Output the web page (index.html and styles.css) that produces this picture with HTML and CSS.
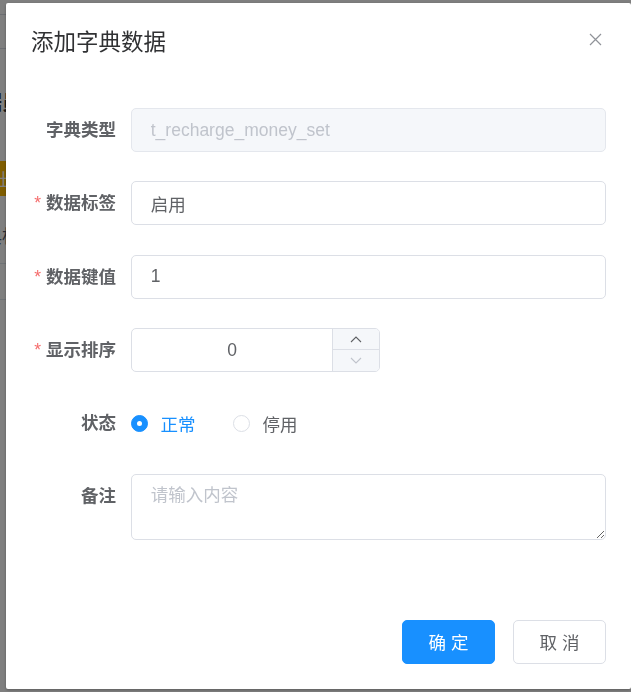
FILE: index.html
```html
<!DOCTYPE html>
<html lang="zh-CN">
<head>
<meta charset="utf-8">
<title>添加字典数据</title>
<link rel="stylesheet" href="styles.css">
</head>
<body>
<div class="page">
  <div class="navbar"></div>
  <div class="tags"><span class="tag">字典</span></div>
  <div class="query"><span class="query-label">数据员</span></div>
  <div class="toolbar"><span class="btn-warning">导出</span></div>
  <div class="table-head"><span class="th">字典标签</span></div>
  <div class="table-row"></div>
</div>
<div class="overlay"></div>

<div class="dialog">
  <div class="dialog-header">
    <span class="dialog-title">添加字典数据</span>
    <button class="dialog-close" aria-label="关闭">
      <svg width="13" height="13" viewBox="0 0 13 13"><path d="M1 1 L12 12 M12 1 L1 12" stroke="#909399" stroke-width="1.2" fill="none"/></svg>
    </button>
  </div>
  <div class="dialog-body">
    <form class="form">
      <div class="form-item">
        <label class="form-label">字典类型</label>
        <div class="form-content"><input class="input input-disabled" value="t_recharge_money_set" disabled></div>
      </div>
      <div class="form-item">
        <label class="form-label required">数据标签</label>
        <div class="form-content"><input class="input" value="启用"></div>
      </div>
      <div class="form-item">
        <label class="form-label required">数据键值</label>
        <div class="form-content"><input class="input" value="1"></div>
      </div>
      <div class="form-item">
        <label class="form-label required">显示排序</label>
        <div class="form-content">
          <div class="number">
            <span class="number-value">0</span>
            <div class="number-ctrl">
              <span class="number-btn">
                <svg width="12" height="7" viewBox="0 0 12 7"><path d="M1 6 L6 1 L11 6" stroke="#606266" stroke-width="1.1" fill="none"/></svg>
              </span>
              <span class="number-btn number-btn-down">
                <svg width="12" height="7" viewBox="0 0 12 7"><path d="M1 1 L6 6 L11 1" stroke="#c0c4cc" stroke-width="1.1" fill="none"/></svg>
              </span>
            </div>
          </div>
        </div>
      </div>
      <div class="form-item">
        <label class="form-label">状态</label>
        <div class="form-content radios">
          <span class="radio checked"><span class="radio-dot"></span><span class="radio-text">正常</span></span>
          <span class="radio"><span class="radio-dot"></span><span class="radio-text">停用</span></span>
        </div>
      </div>
      <div class="form-item">
        <label class="form-label">备注</label>
        <div class="form-content"><textarea class="textarea" placeholder="请输入内容"></textarea></div>
      </div>
    </form>
  </div>
  <div class="dialog-footer">
    <button class="btn btn-primary">确 定</button>
    <button class="btn btn-default">取 消</button>
  </div>
</div>
</body>
</html>
```

FILE: styles.css
```css
html, body {
  margin: 0;
  padding: 0;
  height: 100%;
  background: #ffffff;
  font-family: "Liberation Sans", "Noto Sans CJK SC", sans-serif;
  overflow: hidden;
}

/* underlying page (mostly hidden by the dialog) */
.page {
  margin-left: -40px;
  width: 700px;
}
.navbar {
  height: 14px;
  border-bottom: 1px solid #d8dce5;
}
.tags {
  height: 33px;
  border-bottom: 1px solid #d8dce5;
  display: flex;
  align-items: center;
  font-size: 15px;
  color: #303133;
}
.tag { margin-left: 8px; }
.query {
  height: 112px;
  display: flex;
  align-items: center;
}
.query-label {
  font-size: 20px;
  font-weight: 700;
  color: #303133;
  margin-left: 2px;
  margin-top: -8px;
}
.toolbar {
  height: 45px;
  display: flex;
  align-items: flex-start;
}
.btn-warning {
  display: inline-flex;
  align-items: center;
  height: 35px;
  padding: 0 8px;
  background: #ffba00;
  color: #ffffff;
  font-size: 17px;
  margin-left: 10px;
}
.table-head {
  height: 57px;
  border-bottom: 1px solid #dfe6ec;
  display: flex;
  align-items: center;
  font-size: 18px;
  color: #515a6e;
}
.th { margin-left: 6px; }
.table-row {
  height: 35px;
  border-bottom: 1px solid #dfe6ec;
}

.overlay {
  position: fixed;
  inset: 0;
  background: rgba(0, 0, 0, 0.5);
}

/* dialog */
.dialog {
  position: fixed;
  left: 6px;
  top: 3px;
  width: 625px;
  background: #ffffff;
  border-radius: 2px;
  box-shadow: 0 1px 3px rgba(0, 0, 0, 0.3);
  box-sizing: border-box;
}
.dialog-header {
  position: relative;
  padding: 25px 25px 12.5px;
}
.dialog-title {
  display: block;
  font-size: 22.5px;
  line-height: 30px;
  color: #303133;
}
.dialog-close {
  position: absolute;
  top: 26px;
  right: 26px;
  width: 20px;
  height: 20px;
  padding: 0;
  border: 0;
  background: transparent;
  display: flex;
  align-items: center;
  justify-content: center;
}

.dialog-body {
  padding: 37.5px 25px;
}
.form { margin: 0; }
.form-item {
  display: flex;
  margin-bottom: 29.3px;
}
.form-label {
  width: 100px;
  flex: none;
  box-sizing: border-box;
  padding-right: 15px;
  text-align: right;
  line-height: 44px;
  font-size: 17.5px;
  font-weight: 700;
  color: #606266;
}
.form-label.required::before {
  content: "*";
  color: #f56c6c;
  margin-right: 5px;
  font-weight: 400;
}
.form-content {
  flex: 1;
  min-width: 0;
}

.input {
  display: block;
  width: 100%;
  height: 44px;
  box-sizing: border-box;
  border: 1px solid #dcdfe6;
  border-radius: 5px;
  padding: 0 18.75px;
  font-family: "Liberation Sans", "Noto Sans CJK SC", sans-serif;
  font-size: 17.5px;
  color: #606266;
  background: #ffffff;
  outline: none;
}
.input-disabled {
  background: #f5f7fa;
  border-color: #e4e7ed;
  color: #c0c4cc;
  -webkit-text-fill-color: #c0c4cc;
}

.number {
  display: flex;
  width: 249px;
  height: 44px;
  box-sizing: border-box;
  border: 1px solid #dcdfe6;
  border-radius: 5px;
  overflow: hidden;
}
.number-value {
  flex: 1;
  text-align: center;
  line-height: 42px;
  font-size: 17.5px;
  color: #606266;
}
.number-ctrl {
  width: 46px;
  flex: none;
  border-left: 1px solid #dcdfe6;
  background: #f5f7fa;
  display: flex;
  flex-direction: column;
}
.number-btn {
  flex: 1;
  display: flex;
  align-items: center;
  justify-content: center;
}
.number-btn-down {
  border-top: 1px solid #dcdfe6;
}

.radios {
  display: flex;
  align-items: center;
  height: 44px;
}
.radio {
  display: inline-flex;
  align-items: center;
  margin-right: 37.5px;
  font-size: 17.5px;
  color: #606266;
}
.radio-dot {
  width: 17px;
  height: 17px;
  box-sizing: border-box;
  border: 1px solid #dcdfe6;
  border-radius: 50%;
  background: #ffffff;
  display: inline-flex;
  align-items: center;
  justify-content: center;
}
.radio-text {
  padding-left: 12.5px;
}
.radio.checked { color: #1890ff; }
.radio.checked .radio-dot {
  border-color: #1890ff;
  background: #1890ff;
}
.radio.checked .radio-dot::after {
  content: "";
  width: 5px;
  height: 5px;
  border-radius: 50%;
  background: #ffffff;
}

.textarea {
  display: block;
  width: 100%;
  height: 66px;
  box-sizing: border-box;
  border: 1px solid #dcdfe6;
  border-radius: 5px;
  padding: 6.25px 18.75px;
  font-family: "Liberation Sans", "Noto Sans CJK SC", sans-serif;
  font-size: 17.5px;
  line-height: 1.5;
  color: #606266;
  resize: vertical;
  outline: none;
}
.textarea::placeholder { color: #c0c4cc; }

.dialog-footer {
  padding: 12.5px 25px 25px;
  display: flex;
  justify-content: flex-end;
  gap: 18px;
}
.btn {
  width: 93px;
  height: 44px;
  box-sizing: border-box;
  border-radius: 5px;
  font-family: "Liberation Sans", "Noto Sans CJK SC", sans-serif;
  font-size: 17.5px;
  padding: 0;
  cursor: pointer;
}
.btn-primary {
  background: #1890ff;
  border: 1px solid #1890ff;
  color: #ffffff;
}
.btn-default {
  background: #ffffff;
  border: 1px solid #dcdfe6;
  color: #606266;
}
```
